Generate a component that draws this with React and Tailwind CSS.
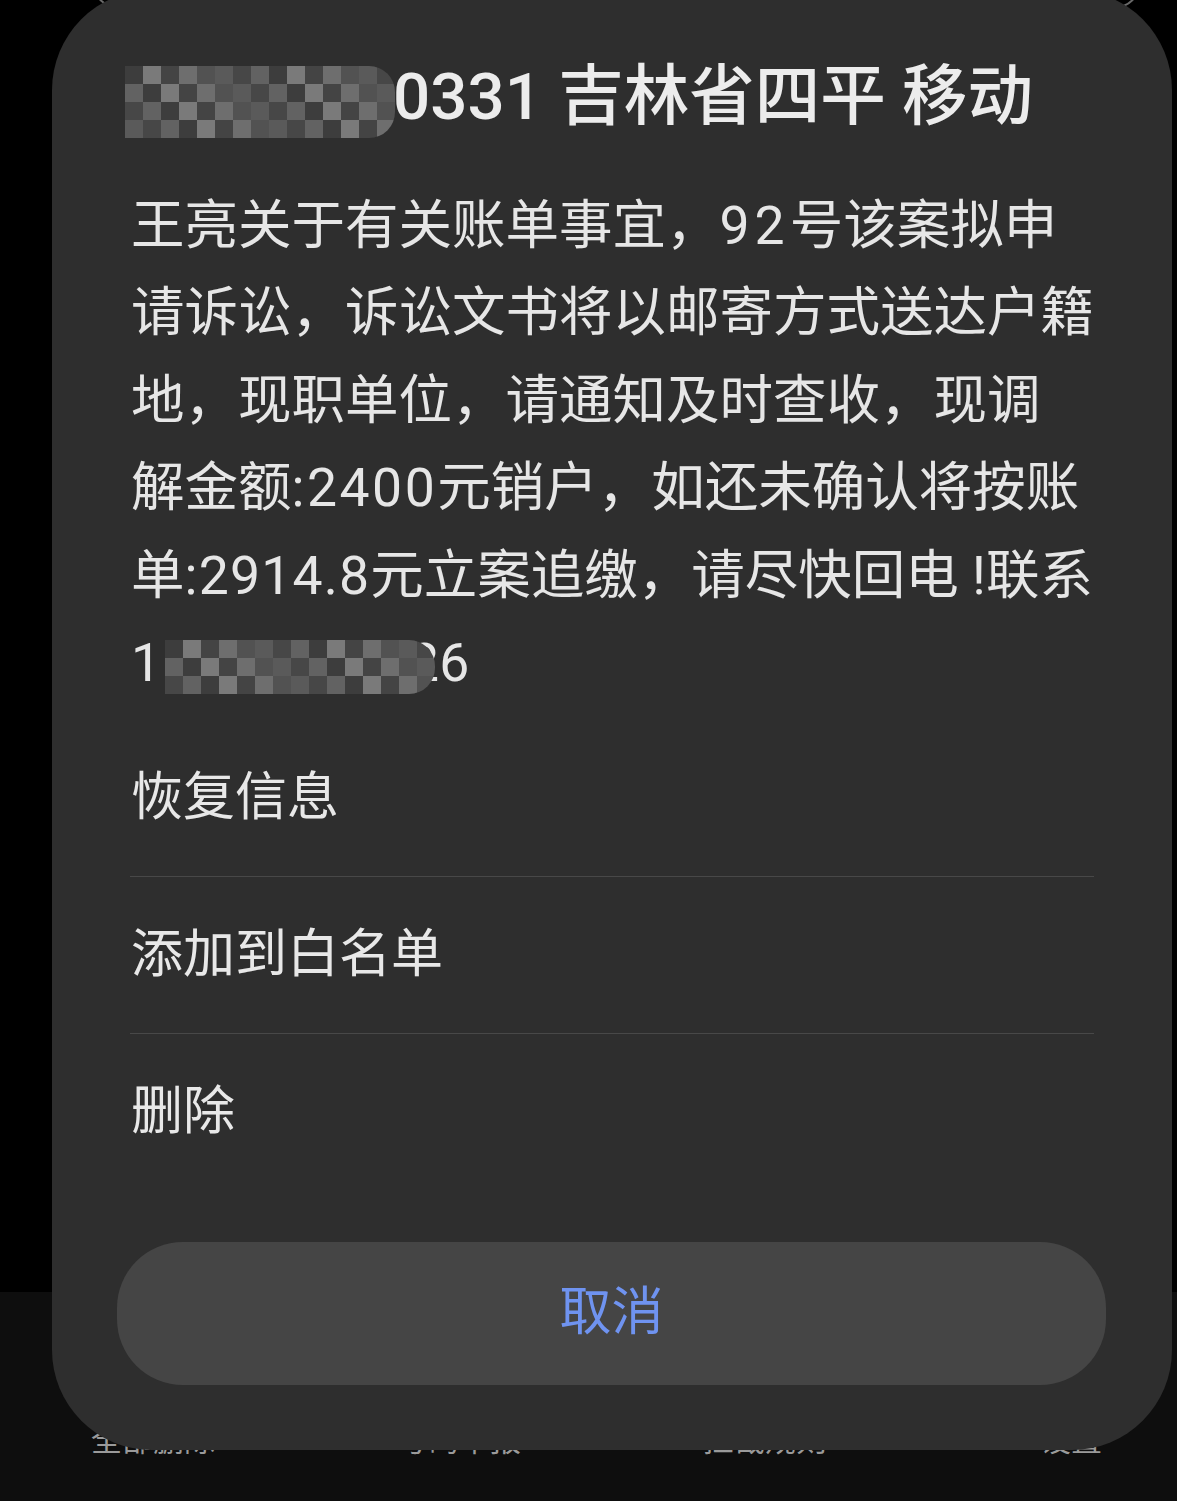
import React from "react";

const mosaicShades = [
    "bg-[#3d3d3d]",
    "bg-[#5a5a5a]",
    "bg-[#474747]",
    "bg-[#6e6e6e]",
    "bg-[#525252]",
    "bg-[#7a7a7a]",
    "bg-[#444444]",
    "bg-[#626262]",
];

function Mosaic({ rows, cols, className }) {
    const cells = [];
    for (let r = 0; r < rows; r++) {
        for (let c = 0; c < cols; c++) {
            cells.push(mosaicShades[(r * 5 + c * 3 + ((r + c) % 2) * 2) % mosaicShades.length]);
        }
    }
    return (
        <span
            className={`inline-grid grid-cols-[repeat(15,18px)] auto-rows-[18px] overflow-hidden rounded-r-[26px] align-middle ${className}`}
        >
            {cells.map((shade, i) => (
                <span key={i} className={shade} />
            ))}
        </span>
    );
}

// digits in the message are a touch wider than Roboto's
const Num = ({ children, className = "tracking-[2.5px]" }) => (
    <span className={className}>{children}</span>
);

const menuItems = ["恢复信息", "添加到白名单", "删除"];

const tabs = ["全部删除", "号码举报", "拦截规则", "设置"];

export default function App() {
    return (
        <div
            className="relative w-[1177px] h-[1501px] overflow-hidden bg-black"
            style={{ fontFamily: 'Roboto, "Noto Sans CJK SC", sans-serif' }}
        >
            {/* page behind the sheet */}
            <div className="absolute left-[93px] top-[-40px] w-[1047px] h-[48px] rounded-[40px] border-2 border-[#6a6a6a]" />
            <div className="h-[1292px]" />
            <div className="h-[209px] bg-[#0e0e0e] pt-[131px]">
                <div className="grid grid-cols-[repeat(4,306px)]">
                    {tabs.map((t) => (
                        <div key={t} className="text-center text-[31px] leading-[36px] text-[#9a9a9a]">
                            {t}
                        </div>
                    ))}
                </div>
            </div>

            {/* action sheet */}
            <div className="absolute left-[52px] top-[-10px] w-[1120px] rounded-[100px] bg-[#2e2e2e] pt-[67px] pb-[65px]">
                <div className="px-[79px] whitespace-nowrap text-[65.5px] leading-[80px] font-medium text-[#ececec]">
                    <Mosaic rows={4} cols={15} className="-ml-[6px] mr-[-2px] relative z-10" />
                    <span>0331 吉林省四平 移动</span>
                </div>

                <div className="mt-[44px] px-[79px] text-[53.5px] leading-[87.5px] text-[#e6e6e6] whitespace-nowrap">
                    <div>
                        王亮关于有关账单事宜，<Num className="tracking-[5px]">92</Num>号该案拟申
                    </div>
                    <div>请诉讼，诉讼文书将以邮寄方式送达户籍</div>
                    <div>地，现职单位，请通知及时查收，现调</div>
                    <div>
                        解金额<Num>:2400</Num>元销户，如还未确认将按账
                    </div>
                    <div>
                        单<Num className="tracking-[1.2px]">:2914.8</Num>元立案追缴，请尽快回电 !联系
                    </div>
                    <div>
                        1<Mosaic rows={3} cols={15} className="ml-[4px] mr-[-26px] relative z-10" />
                        26
                    </div>
                </div>

                <div className="mt-[13px] px-[78px]">
                    {menuItems.map((item, i) => (
                        <div
                            key={item}
                            className={`flex h-[157px] items-center pl-[1px] text-[52px] text-[#e8e8e8] ${
                                i < menuItems.length - 1 ? "border-b border-[#484848]" : ""
                            }`}
                        >
                            {item}
                        </div>
                    ))}
                </div>

                <button className="mx-[65px] mt-[51px] flex h-[143px] w-[989px] items-center justify-center rounded-[66px] bg-[#454545] text-[52px] text-[#6f93f0]">
                    取消
                </button>
            </div>
        </div>
    );
}
